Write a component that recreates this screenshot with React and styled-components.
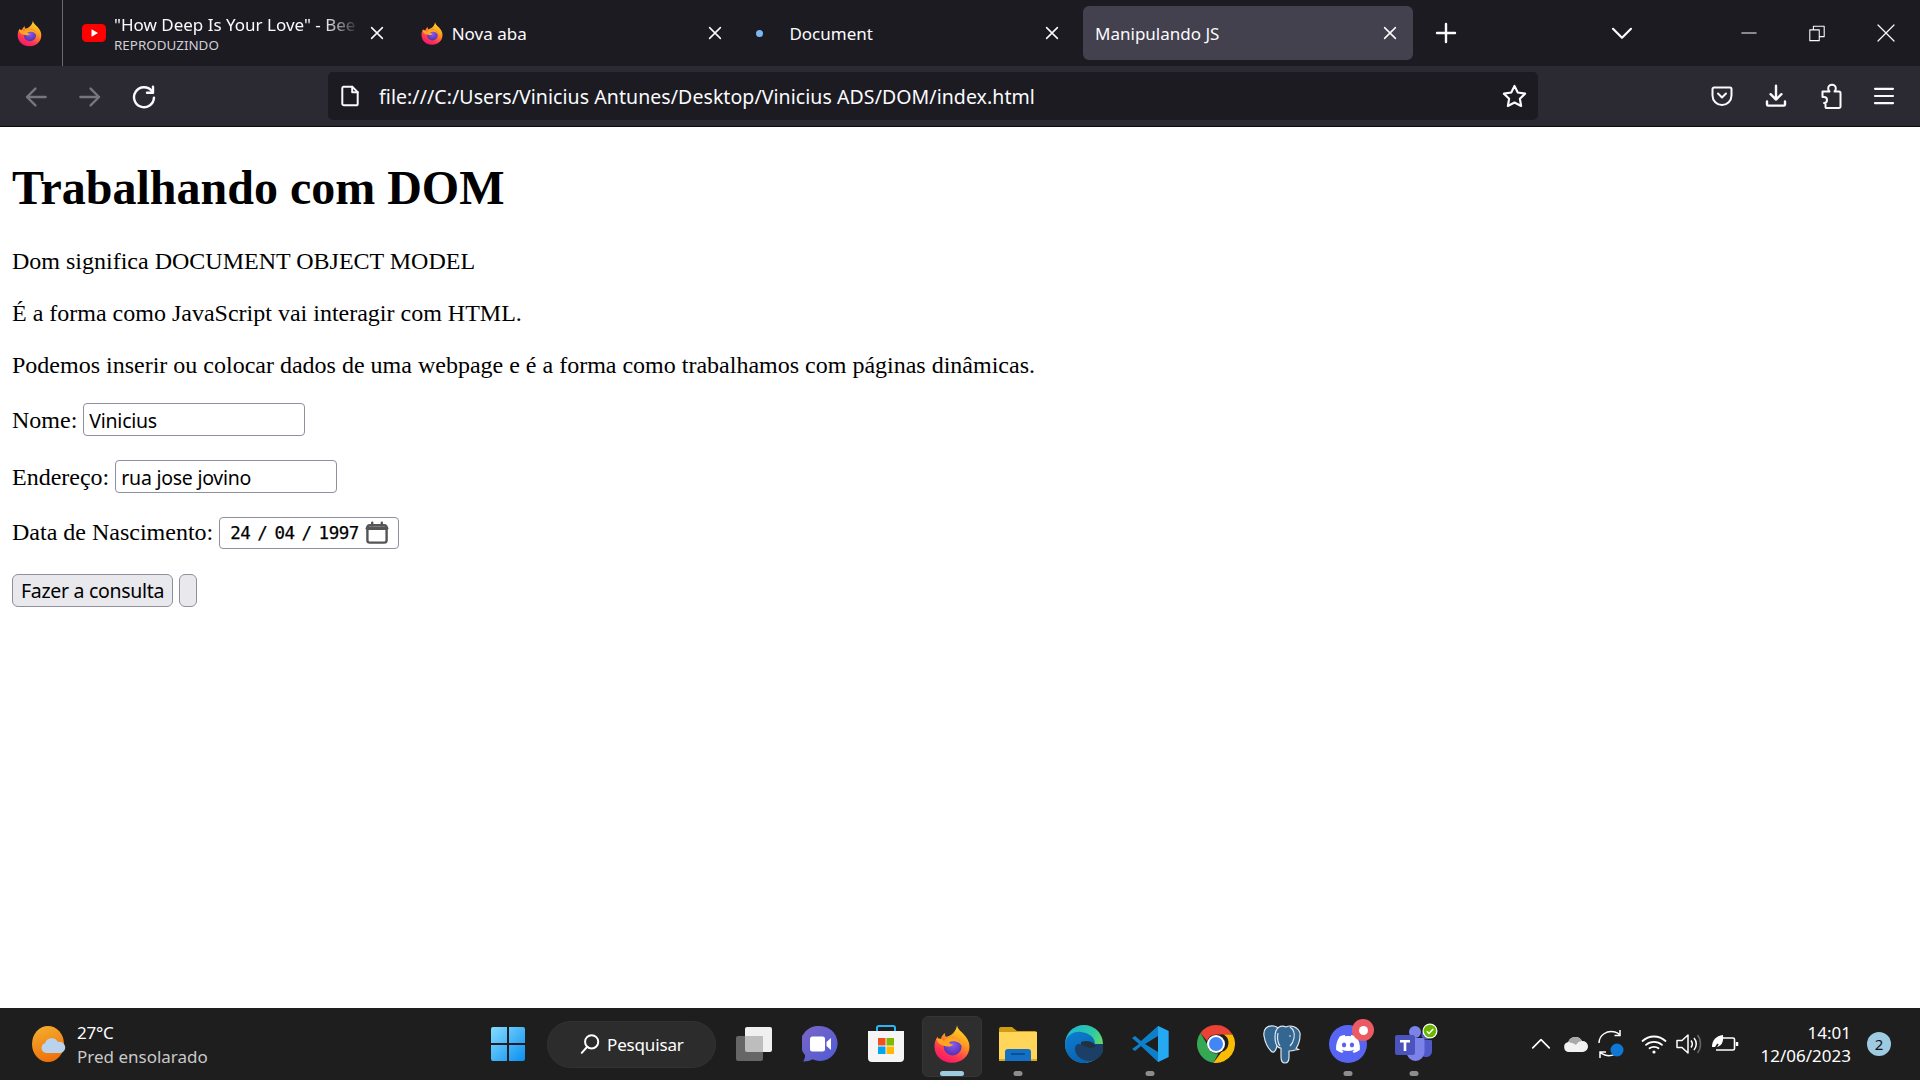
import React from "react";
import styled, { createGlobalStyle } from "styled-components";
import { FaDiscord } from "react-icons/fa";

const UI = '"Noto Sans", "Open Sans", sans-serif';

const Global = createGlobalStyle`
  html, body { margin: 0; padding: 0; height: 100%; background: #fff; }
  #root { height: 100%; }
  * { box-sizing: border-box; }
`;

const Screen = styled.div`
  display: flex;
  flex-direction: column;
  width: 1920px;
  height: 1080px;
  overflow: hidden;
`;

/* ---------- tab strip ---------- */
const TabStrip = styled.header`
  display: flex;
  align-items: center;
  height: 66px;
  flex: none;
  background: #1c1b22;
  color: #fbfbfe;
  font-family: ${UI};
`;
const FirefoxMenu = styled.div`
  width: 63px;
  height: 66px;
  display: flex;
  align-items: center;
  justify-content: center;
  padding-right: 3px;
  border-right: 1px solid #6a6a70;
  margin-right: 7px;
  flex: none;
`;
const Tabs = styled.div`
  display: flex;
  gap: 7.7px;
  flex: none;
`;
const Tab = styled.div`
  width: 330px;
  height: 54px;
  flex: none;
  display: flex;
  align-items: center;
  gap: 8px;
  padding: 0 14px 0 12px;
  border-radius: 6px;
  background: ${(p) => (p.$active ? "#42414d" : "transparent")};
`;
const FaviconSlot = styled.div`
  width: 24px;
  height: 24px;
  flex: none;
  display: flex;
  align-items: center;
  justify-content: center;
`;
const LoadDot = styled.span`
  width: 7px;
  height: 7px;
  flex: none;
  border-radius: 50%;
  background: #7ab8f5;
  margin-right: 20px;
`;
const TabLabel = styled.div`
  flex: 1;
  min-width: 0;
  display: flex;
  flex-direction: column;
  justify-content: center;
`;
const TabTitle = styled.div`
  font-size: 17px;
  line-height: 23px;
  letter-spacing: 0;
  white-space: nowrap;
  overflow: hidden;
  ${(p) =>
    p.$fade &&
    `-webkit-mask-image: linear-gradient(to right, #000 85%, transparent 100%);
     mask-image: linear-gradient(to right, #000 85%, transparent 100%);`}
`;
const TabSub = styled.div`
  font-size: 13.4px;
  line-height: 16px;
  margin-top: 1px;
  color: #cfcfd4;
`;
const PlainButton = styled.div`
  width: ${(p) => p.$w || 54}px;
  height: ${(p) => p.$h || 48}px;
  margin-left: ${(p) => p.$ml || 0}px;
  margin-right: ${(p) => p.$mr || 0}px;
  flex: none;
  display: flex;
  align-items: center;
  justify-content: center;
  color: ${(p) => p.$color || "#fbfbfe"};
`;
const NavButton = styled(PlainButton)`
  padding-top: 2px;
`;
const WindowControls = styled.div`
  display: flex;
  margin-left: auto;
  align-items: center;
`;

/* ---------- toolbar ---------- */
const Toolbar = styled.nav`
  display: flex;
  align-items: center;
  height: 61px;
  flex: none;
  padding: 0 9px 0 9px;
  background: #2b2a33;
  border-bottom: 1px solid #0c0c0d;
  font-family: ${UI};
`;
const UrlBar = styled.div`
  width: 1210px;
  height: 48px;
  margin-left: 157px;
  flex: none;
  display: flex;
  align-items: center;
  padding: 0 8px 0 10px;
  background: #1c1b22;
  border-radius: 5px;
  color: #fbfbfe;
`;
const UrlText = styled.div`
  margin-left: 17px;
  font-size: 19.5px;
  letter-spacing: 0.07px;
  white-space: nowrap;
`;
const UrlEnd = styled.div`
  margin-left: auto;
  display: flex;
  align-items: center;
`;
const ToolEnd = styled.div`
  margin-left: auto;
  display: flex;
`;

/* ---------- page ---------- */
const Page = styled.main`
  flex: 1;
  min-height: 0;
  overflow: hidden;
  padding: 0 12px;
  background: #fff;
  color: #000;
  font-family: "Liberation Serif", "Times New Roman", serif;
  font-size: 24px;
`;
const Heading = styled.h1`
  font-size: 48px;
  font-weight: 700;
  margin: 33px 0 32px;
`;
const Para = styled.p`
  margin: ${(p) => p.$top || 24}px 0 24px;
  line-height: 28px;
`;
const TextField = styled.input`
  width: ${(p) => p.$w}px;
  height: 33px;
  padding: 1px 5px 0;
  border: 1px solid #8f8f9d;
  border-radius: 4px;
  background: #fff;
  color: #000;
  font-family: ${UI};
  font-size: 19.5px;
  letter-spacing: -0.25px;
  outline: none;
`;
const DateField = styled.span`
  display: inline-flex;
  align-items: center;
  justify-content: space-between;
  width: 180px;
  height: 32px;
  padding: 0 9px 0 10px;
  border: 1px solid #8f8f9d;
  border-radius: 4px;
  background: #fff;
  font-family: "DejaVu Sans Mono", "Liberation Mono", monospace;
  font-size: 17.5px;
  letter-spacing: -0.5px;
  word-spacing: -3px;
  -webkit-text-stroke: 0.25px #000;
  vertical-align: 1px;
`;
const FormButton = styled.button`
  height: 33px;
  min-width: 18px;
  padding: 0 8px;
  border: 1px solid #8f8f9d;
  border-radius: 6px;
  background: #e9e9ed;
  color: #000;
  font-family: ${UI};
  font-size: 19.5px;
  letter-spacing: -0.3px;
  vertical-align: baseline;
  ${(p) => p.$empty && "width: 18px; padding: 0; vertical-align: top;"}
`;

/* ---------- taskbar ---------- */
const Taskbar = styled.footer`
  height: 72px;
  flex: none;
  display: flex;
  align-items: center;
  background: #1e1e1e;
  color: #fff;
  font-family: ${UI};
`;
const Weather = styled.div`
  width: 475px;
  flex: none;
  display: flex;
  align-items: center;
  gap: 11px;
  padding-left: 32px;
`;
const WeatherText = styled.div`
  display: flex;
  flex-direction: column;
  line-height: 24px;
  padding-top: 2px;
`;
const Temp = styled.span`
  font-size: 17px;
  letter-spacing: -0.2px;
`;
const Cond = styled.span`
  font-size: 17px;
  color: #c9c9c9;
`;
const Slot = styled.div`
  position: relative;
  width: 66px;
  height: 72px;
  flex: none;
  display: flex;
  align-items: center;
  justify-content: center;
`;
const ActiveBox = styled.div`
  position: absolute;
  left: 3px;
  right: 3px;
  top: 8px;
  bottom: 3px;
  background: #2e2e2e;
  border: 1px solid #353535;
  border-radius: 6px;
`;
const Indicator = styled.span`
  position: absolute;
  left: 50%;
  bottom: 4px;
  transform: translateX(-50%);
  width: ${(p) => (p.$active ? 24 : 9)}px;
  height: 5px;
  border-radius: 3px;
  background: ${(p) => (p.$active ? "#9fcbe2" : "#8d8d8d")};
`;
const IconLayer = styled.div`
  position: relative;
  display: flex;
`;
const SearchPill = styled.div`
  width: 169px;
  height: 47px;
  margin: 0 5px 0 6px;
  flex: none;
  display: flex;
  align-items: center;
  gap: 6px;
  padding-left: 31px;
  border-radius: 24px;
  background: #2c2c2c;
  border: 1px solid #323232;
  font-size: 17px;
  letter-spacing: -0.15px;
`;
const Tray = styled.div`
  margin-left: auto;
  display: flex;
  align-items: center;
  padding-right: 29px;
`;
const TrayIcon = styled.div`
  width: 34px;
  height: 40px;
  margin-left: ${(p) => p.$ml || 0}px;
  display: flex;
  align-items: center;
  justify-content: center;
  color: #fff;
`;
const Clock = styled.div`
  width: 109px;
  display: flex;
  flex-direction: column;
  align-items: flex-end;
  font-size: 17px;
  line-height: 23px;
`;
const NotifBadge = styled.div`
  width: 24px;
  height: 24px;
  margin-left: 16px;
  border-radius: 50%;
  background: #9fcbe2;
  color: #111;
  font-size: 15px;
  display: flex;
  align-items: center;
  justify-content: center;
`;

/* ---------- icons ---------- */
const Line = ({ size = 20, sw = 2, children, vb = 20 }) => (
  <svg width={size} height={size} viewBox={`0 0 ${vb} ${vb}`} fill="none" stroke="currentColor" strokeWidth={sw} strokeLinecap="round" strokeLinejoin="round">
    {children}
  </svg>
);

const FirefoxLogo = ({ size = 24 }) => {
  const id = React.useId().replace(/[^a-zA-Z0-9]/g, "");
  return (
    <svg width={size} height={size} viewBox="0 0 32 32">
      <defs>
        <linearGradient id={`${id}a`} x1="0.8" y1="0" x2="0.3" y2="1">
          <stop offset="0" stopColor="#ffe226" />
          <stop offset="0.4" stopColor="#ff9a1f" />
          <stop offset="0.75" stopColor="#ff3750" />
          <stop offset="1" stopColor="#f5156c" />
        </linearGradient>
        <radialGradient id={`${id}b`} cx="0.5" cy="0.4" r="0.7">
          <stop offset="0" stopColor="#8a5bf0" />
          <stop offset="1" stopColor="#4a2aa8" />
        </radialGradient>
      </defs>
      <path d="M20 1c.6 3.2 3 4.7 5 6.700 3 3 5 6.300 5 10.300 0 7.800-6.200 13-14 13S2 25.800 2 18c0-3 .8-5.800 2.500-8 .2 1.600 1 2.600 2.200 3 .3-2 1.700-4.700 4-5.800-.7 1.600-.3 2.800.8 3 3.800-.9 7.700-3.700 8.500-9.200z" fill={`url(#${id}a)`} />
      <circle cx="16.500" cy="18" r="7.200" fill={`url(#${id}b)`} />
      <path d="M3.500 12c2.300-.8 4.500 0 6 1.700 1.800-2.400 4.500-3.200 7.300-3 4.400.4 7.500 3.800 7.600 7.800-1.300-2.900-4-4.800-7.400-4.700-1.300 0-2.400.4-3.400 1 .6 1 1.800 1.500 3.300 1.500-.8 1.300-2.700 2-4.500 1.700C8.500 17.500 4.500 16 3.500 12z" fill="#ffa51f" />
    </svg>
  );
};
const YouTube = () => (
  <svg width="24" height="18" viewBox="0 0 24 18">
    <rect width="24" height="18" rx="4.500" fill="#f00" />
    <path d="M9.500 5.200v7.600l6.500-3.800z" fill="#fff" />
  </svg>
);
const CloseX = ({ size = 18 }) => (
  <Line size={size} sw={1.7}><path d="M4 4l12 12M16 4L4 16" /></Line>
);
const Pocket = () => (
  <svg width="22" height="22" viewBox="0 0 22 22" fill="none" stroke="currentColor" strokeWidth="2" strokeLinecap="round" strokeLinejoin="round">
    <path d="M3 2.500h16c.800 0 1.500.700 1.500 1.500v6.500c0 5.200-4.300 9.500-9.500 9.500S1.500 15.700 1.500 10.500V4c0-.800.700-1.500 1.500-1.500z" />
    <path d="M7 8.500l4 4 4-4" />
  </svg>
);
const Puzzle = () => (
  <svg width="24" height="26" viewBox="0 0 24 26" fill="none" stroke="currentColor" strokeWidth="2" strokeLinejoin="round">
    <path d="M8 25h13a1.500 1.500 0 0 0 1.500-1.500V10A1.500 1.500 0 0 0 21 8.500h-4.500c1-1 1.300-2 1.300-3a3.800 3.800 0 0 0-7.600 0c0 1 .3 2 1.300 3H4.500V14H6a3 3 0 0 1 0 6H7.500v3.500A1.500 1.500 0 0 0 8 25z" />
  </svg>
);
const WinLogo = () => (
  <svg width="36" height="36" viewBox="0 0 36 36">
    <defs>
      <linearGradient id="winG" x1="0" y1="0" x2="1" y2="1">
        <stop offset="0" stopColor="#86dcff" />
        <stop offset="1" stopColor="#0a8ff0" />
      </linearGradient>
    </defs>
    <path d="M1 3a2 2 0 0 1 2-2h14v16H1zM19 1h14a2 2 0 0 1 2 2v14H19zM1 19h16v16H3a2 2 0 0 1-2-2zM19 19h16v14a2 2 0 0 1-2 2H19z" fill="url(#winG)" />
  </svg>
);
const TaskView = () => (
  <svg width="38" height="38" viewBox="0 0 38 38">
    <rect x="10" y="2" width="27" height="25" rx="2" fill="#f0f0f0" />
    <rect x="1" y="11" width="27" height="25" rx="2" fill="#6e6e6e" fillOpacity="0.9" />
    <path d="M10 11h18v16H12a2 2 0 0 1-2-2z" fill="#bdbdbd" />
  </svg>
);
const ChatIcon = () => (
  <svg width="36" height="36" viewBox="0 0 36 36">
    <defs>
      <linearGradient id="chatG" x1="0" y1="0" x2="1" y2="1">
        <stop offset="0" stopColor="#7a66c6" />
        <stop offset="1" stopColor="#4f5bd5" />
      </linearGradient>
    </defs>
    <path d="M18 0a17.500 17.500 0 1 1-7.500 33.300C8 34.700 5 35.500 1 35.500c1.500-2 2.200-4.300 2-6.500A17.500 17.500 0 0 1 18 0z" fill="url(#chatG)" />
    <rect x="8" y="10.500" width="15" height="15" rx="2.500" fill="#fff" />
    <path d="M24.500 16l4.500-4v12l-4.500-4z" fill="#fff" />
  </svg>
);
const StoreIcon = () => (
  <svg width="38" height="38" viewBox="0 0 38 38">
    <path d="M10 7V3a2 2 0 0 1 2-2h14a2 2 0 0 1 2 2v4" fill="none" stroke="#29b6f6" strokeWidth="2" />
    <path d="M1 6h36v27a4 4 0 0 1-4 4H5a4 4 0 0 1-4-4z" fill="#f5f5f5" />
    <rect x="11" y="13" width="7.500" height="7.500" fill="#f25022" />
    <rect x="19.500" y="13" width="7.500" height="7.500" fill="#7fba00" />
    <rect x="11" y="21.500" width="7.500" height="7.500" fill="#00a4ef" />
    <rect x="19.500" y="21.500" width="7.500" height="7.500" fill="#ffb900" />
  </svg>
);
const FolderIcon = () => (
  <svg width="38" height="36" viewBox="0 0 38 36">
    <path d="M0 3a2 2 0 0 1 2-2h11l5 4h18a2 2 0 0 1 2 2v4H0z" fill="#d29c12" />
    <path d="M0 6h38v28a1 1 0 0 1-1 1H1a1 1 0 0 1-1-1z" fill="#ffd55a" />
    <path d="M6 35V26a3 3 0 0 1 3-3h20a3 3 0 0 1 3 3v9z" fill="#1470c4" />
    <rect x="12" y="27" width="14" height="2" fill="#0b4f94" />
    <rect x="0" y="33" width="6" height="2" fill="#e0a818" />
    <rect x="32" y="33" width="6" height="2" fill="#e0a818" />
  </svg>
);
const EdgeIcon = () => (
  <svg width="38" height="38" viewBox="0 0 38 38">
    <defs>
      <linearGradient id="edgeA" x1="0" y1="0" x2="1" y2="0.6">
        <stop offset="0" stopColor="#1fb4d8" />
        <stop offset="0.6" stopColor="#2cc8a8" />
        <stop offset="1" stopColor="#6fdc5c" />
      </linearGradient>
      <linearGradient id="edgeB" x1="0" y1="0" x2="0.6" y2="1">
        <stop offset="0" stopColor="#0c7fd0" />
        <stop offset="1" stopColor="#0a5fae" />
      </linearGradient>
    </defs>
    <circle cx="19" cy="19" r="19" fill="url(#edgeA)" />
    <path d="M0 19C1 10 9 6 16 7c8 1 14 5 14 12H38c0 10-8 19-19 19C8 38 0 30 0 19z" fill="url(#edgeB)" />
    <path d="M30 19c0 2-2 4-6 4-5 0-5-4-10-4-3 0-4 3-4 5 0 6 6 12 15 12 5 0 10-3 13-9 0-2 0-5 0-8z" fill="#1b3f66" />
    <path d="M16 17c5-2 12-1 14 3 1 2-1 3-6 3-4 0-5-3-8-3z" fill="#22313f" />
  </svg>
);
const VSCodeIcon = () => (
  <svg width="38" height="38" viewBox="0 0 38 38">
    <path d="M27 1L37.500 6v26L27 37 10 21l-6 5-3-2 7-5-7-6 3-2 6 5z" fill="#0d80c9" />
    <path d="M27 1l10.500 5v26L27 37z" fill="#24a9f2" />
    <path d="M27 11L14 19l13 8z" fill="#1e1e1e" />
  </svg>
);
const ChromeIcon = () => (
  <svg width="38" height="38" viewBox="0 0 38 38">
    <path d="M19 0a19 19 0 0 1 16.500 9.500H19a9.500 9.500 0 0 0-9 6.500L3.500 8A19 19 0 0 1 19 0z" fill="#ea4335" />
    <path d="M3.500 8L10 19a9.500 9.500 0 0 0 11.500 9.200L16.500 37.800A19 19 0 0 1 3.500 8z" fill="#34a853" />
    <path d="M35.500 9.500A19 19 0 0 1 16.500 37.800L24.500 27a9.500 9.500 0 0 0 2-17.500z" fill="#fbbc04" />
    <circle cx="19" cy="19" r="9" fill="#fff" />
    <circle cx="19" cy="19" r="7" fill="#4285f4" />
  </svg>
);
const PostgresIcon = () => (
  <svg width="40" height="40" viewBox="0 0 40 40" stroke="#dfe8ef" strokeWidth="1.200" strokeLinejoin="round">
    <path d="M12 2C5 1 1 5 2 12c1 6 4 12 7 15 2 2 4 1 5-2l1-3 3-1V9c0-3-2-6-6-7z" fill="#336791" />
    <path d="M38 12c1-5-4-10-10-10-2 0-3 .4-4 1-2-1-5-1-7 0-3 2-4 6-4 10 0 4 1 8 3 10 1 1 2 1 3 1v9c0 3 1 6 4 6 3 0 4-2 4-6v-6c2 0 4 0 6-1l4-.5-3-1c2-3 4-8 4-13z" fill="#336791" />
    <path d="M16 9c-1 5 0 10 2 13M28 3c3 2 5 6 4 11-.5 3-2 6-4 8" fill="none" />
    <path d="M27 12h2" fill="none" />
  </svg>
);
const DiscordCircle = styled.div`
  width: 38px;
  height: 38px;
  border-radius: 50%;
  background: #5865f2;
  display: flex;
  align-items: center;
  justify-content: center;
  color: #fff;
`;
const RedBadge = styled.span`
  position: absolute;
  right: -7px;
  top: -6px;
  width: 22px;
  height: 22px;
  border-radius: 50%;
  background: #ec5b63;
  display: flex;
  align-items: center;
  justify-content: center;
  &::after {
    content: "";
    width: 9px;
    height: 9px;
    border-radius: 50%;
    background: #fff;
  }
`;
const GreenBadge = styled.span`
  position: absolute;
  right: -5px;
  top: -3px;
  display: flex;
`;
const TeamsIcon = () => (
  <svg width="38" height="36" viewBox="0 0 38 36">
    <circle cx="20" cy="6" r="6" fill="#7b83eb" />
    <circle cx="31" cy="9" r="4.500" fill="#5059c9" />
    <path d="M26 14h10a1 1 0 0 1 1 1v10c0 4-3 6-6 6s-5-2-5-5z" fill="#5059c9" />
    <path d="M11 12h17a1.500 1.500 0 0 1 1.500 1.500V26a9 9 0 0 1-18 0z" fill="#7b83eb" />
    <rect x="0" y="9" width="20" height="20" rx="2" fill="#4b53bc" />
    <path d="M5 14h10v2.500h-3.700V25H8.700v-8.500H5z" fill="#fff" />
  </svg>
);
const CheckBadge = () => (
  <svg width="16" height="16" viewBox="0 0 16 16">
    <circle cx="8" cy="8" r="7.500" fill="#fff" />
    <circle cx="8" cy="8" r="6.300" fill="#6bb700" />
    <path d="M4.800 8.300l2.200 2.200 4.200-4.500" fill="none" stroke="#fff" strokeWidth="1.500" />
  </svg>
);
const WeatherIcon = () => (
  <svg width="34" height="36" viewBox="0 0 34 36">
    <defs>
      <linearGradient id="sunG" x1="0.3" y1="0" x2="0.6" y2="1">
        <stop offset="0" stopColor="#f3ac2c" />
        <stop offset="1" stopColor="#ef6f0b" />
      </linearGradient>
    </defs>
    <ellipse cx="16" cy="18" rx="16" ry="18" fill="url(#sunG)" />
    <path d="M14 27a5 5 0 0 1-1-9.700A7 7 0 0 1 26 16a5.500 5.500 0 0 1 3 11z" fill="#b9d3ee" />
  </svg>
);
const CloudTray = () => (
  <svg width="26" height="18" viewBox="0 0 26 18">
    <path d="M6 17a5 5 0 0 1-.8-9.900A7.500 7.500 0 0 1 19 6a5.500 5.500 0 0 1 1 11z" fill="#f2f2f2" />
    <path d="M5.200 7.100A7.500 7.500 0 0 1 19 6c-3 .3-4.600 2-6 4-2.500-2-5-2-7.800-2.900z" fill="#a9a9a9" />
  </svg>
);
const SyncTray = () => (
  <svg width="30" height="32" viewBox="0 0 30 32" fill="none" stroke="#fff" strokeWidth="1.500">
    <path d="M3 15C3 7 11 2 19 4c2 .6 4 2 5 3M24 2v5.500h-5.500" />
    <path d="M24 21c-2 5-9 8-15 6-2-.6-4-2-5-3M4 30v-6h6" />
    <circle cx="21" cy="22" r="6.500" fill="#0f78d4" stroke="none" />
  </svg>
);
const WifiTray = () => (
  <svg width="26" height="20" viewBox="0 0 26 20" fill="none" stroke="#fff" strokeWidth="1.800" strokeLinecap="round">
    <path d="M1.500 7c6.500-6 16.500-6 23 0" />
    <path d="M5 10.800c4.500-4 11.500-4 16 0" />
    <path d="M8.500 14.300c2.500-2 6.500-2 9 0" />
    <circle cx="13" cy="18" r="1.600" fill="#fff" stroke="none" />
  </svg>
);
const VolumeTray = () => (
  <svg width="26" height="24" viewBox="0 0 26 24" fill="none" stroke="#fff" strokeWidth="1.500" strokeLinejoin="round">
    <path d="M1 8.500h5l6-5.500v18l-6-5.500H1z" />
    <path d="M15 8.500c1.500 2 1.500 5 0 7M18 6c3 3.500 3 8.500 0 12" />
    <path d="M21.500 3c4 5 4 13 0 18" stroke="#666" />
  </svg>
);
const BatteryTray = () => (
  <svg width="28" height="20" viewBox="0 0 28 20" fill="none" stroke="#fff" strokeWidth="1.600">
    <path d="M8 4h14a1.500 1.500 0 0 1 1.500 1.500v9A1.500 1.500 0 0 1 22 16H5" />
    <path d="M26 8v4" strokeWidth="2.500" />
    <path d="M1 13C1 6 5 2 12 1c1 7-2 12-7 12-1 0-2 0-4 0z" fill="#fff" stroke="none" />
    <path d="M1 19l6-9" stroke="#1e1e1e" />
  </svg>
);

const Indicated = ({ active, on, children }) => (
  <Slot>
    {active && <ActiveBox />}
    <IconLayer>{children}</IconLayer>
    {on && <Indicator $active={active} />}
  </Slot>
);

export default function App() {
  return (
    <Screen>
      <Global />
      <TabStrip>
        <FirefoxMenu><FirefoxLogo size={27} /></FirefoxMenu>
        <Tabs>
          <Tab>
            <FaviconSlot><YouTube /></FaviconSlot>
            <TabLabel>
              <TabTitle $fade>"How Deep Is Your Love" - Bee Gees</TabTitle>
              <TabSub>REPRODUZINDO</TabSub>
            </TabLabel>
            <CloseX />
          </Tab>
          <Tab>
            <FaviconSlot><FirefoxLogo size={27} /></FaviconSlot>
            <TabLabel><TabTitle>Nova aba</TabTitle></TabLabel>
            <CloseX />
          </Tab>
          <Tab>
            <FaviconSlot><LoadDot /></FaviconSlot>
            <TabLabel><TabTitle>Document</TabTitle></TabLabel>
            <CloseX />
          </Tab>
          <Tab $active>
            <TabLabel><TabTitle>Manipulando JS</TabTitle></TabLabel>
            <CloseX />
          </Tab>
        </Tabs>
        <PlainButton $w={52} $ml={7}>
          <Line size={24} sw={2}><path d="M10 2.500v15M2.500 10h15" /></Line>
        </PlainButton>
        <WindowControls>
          <PlainButton $w={56} $mr={65}>
            <Line size={24} sw={1.8}><path d="M2.500 6.500l7.500 7.500 7.500-7.500" /></Line>
          </PlainButton>
          <PlainButton $w={68}>
            <Line size={18} sw={1.1}><path d="M2 10h16" /></Line>
          </PlainButton>
          <PlainButton $w={68} $mr={1}>
            <Line size={18} sw={1.200}>
              <path d="M2 6.500h10.500v12H2zM6 6V2.500h12V14h-4.500" />
            </Line>
          </PlainButton>
          <PlainButton $w={68}>
            <Line size={20} sw={1.2}><path d="M2 2l16 16M18 2L2 18" /></Line>
          </PlainButton>
        </WindowControls>
      </TabStrip>

      <Toolbar>
        <NavButton $color="#77767c">
          <Line size={24}><path d="M18 10H2.500M9.500 3l-7 7 7 7" /></Line>
        </NavButton>
        <NavButton $color="#77767c">
          <Line size={24}><path d="M2 10h15.500M10.500 3l7 7-7 7" /></Line>
        </NavButton>
        <NavButton>
          <Line size={24}>
            <path d="M16.500 5A8.300 8.300 0 1 0 18.300 10.500" />
            <path d="M17.500 1.500v5h-5" />
          </Line>
        </NavButton>
        <UrlBar>
          <PlainButton $w={24} $h={24}>
            <Line size={22} sw={1.8}>
              <path d="M4 1.500h8L17 6.500V17a1.500 1.500 0 0 1-1.500 1.500h-11A1.500 1.500 0 0 1 3 17V3a1.500 1.500 0 0 1 1-1.500z" />
              <path d="M12 1.500v5h5" />
            </Line>
          </PlainButton>
          <UrlText>file:///C:/Users/Vinicius Antunes/Desktop/Vinicius ADS/DOM/index.html</UrlText>
          <UrlEnd>
            <PlainButton $w={32} $h={32}>
              <Line size={25} sw={1.7}>
                <path d="M10 1.500l2.600 5.300 5.900.9-4.200 4.100 1 5.800L10 14.800l-5.300 2.800 1-5.800L1.500 7.700l5.900-.9z" />
              </Line>
            </PlainButton>
          </UrlEnd>
        </UrlBar>
        <ToolEnd>
          <PlainButton><Pocket /></PlainButton>
          <PlainButton>
            <Line size={24}>
              <path d="M10 1.500V13M5.500 8.500L10 13l4.500-4.500" />
              <path d="M2.500 14.500V17a1 1 0 0 0 1 1h13a1 1 0 0 0 1-1v-2.500" />
            </Line>
          </PlainButton>
          <PlainButton $w={53}><Puzzle /></PlainButton>
          <PlainButton $w={55}>
            <Line size={24} sw={1.8}><path d="M2.500 4h15M2.500 10h15M2.500 16h15" /></Line>
          </PlainButton>
        </ToolEnd>
      </Toolbar>

      <Page>
        <Heading>Trabalhando com DOM</Heading>
        <Para>Dom significa DOCUMENT OBJECT MODEL</Para>
        <Para>É a forma como JavaScript vai interagir com HTML.</Para>
        <Para>Podemos inserir ou colocar dados de uma webpage e é a forma como trabalhamos com páginas dinâmicas.</Para>
        <Para>Nome: <TextField $w={222} defaultValue="Vinicius" /></Para>
        <Para>Endereço: <TextField $w={222} defaultValue="rua jose jovino" /></Para>
        <Para>Data de Nascimento: <DateField>
          <span>24 / 04 / 1997</span>
          <Line size={24} sw={2}>
            <rect x="2" y="3.500" width="16" height="14.500" rx="2" stroke="#555" />
            <path d="M2 6h16" stroke="#555" strokeWidth="3" />
            <path d="M6 1.500v2M14 1.500v2" stroke="#555" />
          </Line>
        </DateField></Para>
        <Para $top={25}><FormButton>Fazer a consulta</FormButton> <FormButton $empty /></Para>
      </Page>

      <Taskbar>
        <Weather>
          <WeatherIcon />
          <WeatherText>
            <Temp>27°C</Temp>
            <Cond>Pred ensolarado</Cond>
          </WeatherText>
        </Weather>
        <Slot><WinLogo /></Slot>
        <SearchPill>
          <Line size={22} sw={1.8}><circle cx="11.500" cy="8" r="6" /><path d="M7.500 12.500L2.500 18" /></Line>
          Pesquisar
        </SearchPill>
        <Indicated><TaskView /></Indicated>
        <Indicated><ChatIcon /></Indicated>
        <Indicated><StoreIcon /></Indicated>
        <Indicated active on><FirefoxLogo size={40} /></Indicated>
        <Indicated on><FolderIcon /></Indicated>
        <Indicated><EdgeIcon /></Indicated>
        <Indicated on><VSCodeIcon /></Indicated>
        <Indicated><ChromeIcon /></Indicated>
        <Indicated><PostgresIcon /></Indicated>
        <Indicated on>
          <DiscordCircle><FaDiscord size={26} /></DiscordCircle>
          <RedBadge />
        </Indicated>
        <Indicated on>
          <TeamsIcon />
          <GreenBadge><CheckBadge /></GreenBadge>
        </Indicated>
        <Tray>
          <TrayIcon>
            <Line size={22} sw={1.5}><path d="M2.500 13.500L10 6l7.500 7.500" /></Line>
          </TrayIcon>
          <TrayIcon $ml={1}><CloudTray /></TrayIcon>
          <TrayIcon $ml={1}><SyncTray /></TrayIcon>
          <TrayIcon $ml={9}><WifiTray /></TrayIcon>
          <TrayIcon $ml={1}><VolumeTray /></TrayIcon>
          <TrayIcon $ml={2}><BatteryTray /></TrayIcon>
          <Clock>
            <span>14:01</span>
            <span>12/06/2023</span>
          </Clock>
          <NotifBadge>2</NotifBadge>
        </Tray>
      </Taskbar>
    </Screen>
  );
}
